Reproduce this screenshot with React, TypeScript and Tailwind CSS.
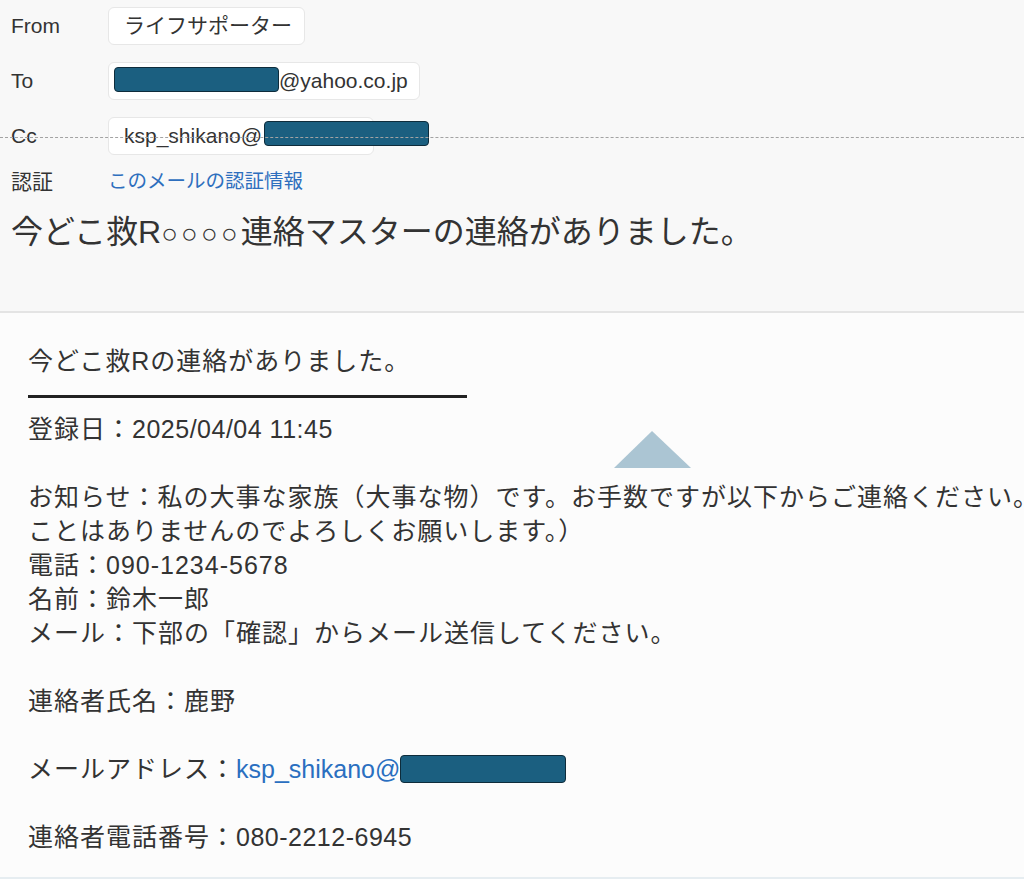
const FONT = "font-['Liberation_Sans','Noto_Sans_CJK_JP',sans-serif]"

function Redacted({ className = '' }: { className?: string }) {
  return (
    <span
      className={`inline-block shrink-0 h-[25px] w-[165px] rounded-[4px] bg-[#1b5f80] border-[1.5px] border-[#0e2c3b] ${className}`}
    />
  )
}

function Pill({ children, className = '' }: { children: React.ReactNode; className?: string }) {
  return (
    <div
      className={`flex items-center h-[38px] px-[15px] bg-white border border-[#e7e7e7] rounded-[6px] whitespace-nowrap ${className}`}
    >
      {children}
    </div>
  )
}

const bodyLines: (string | null)[] = [
  'お知らせ：私の大事な家族（大事な物）です。お手数ですが以下からご連絡ください。',
  'ことはありませんのでよろしくお願いします。）',
  '電話：090-1234-5678',
  '名前：鈴木一郎',
  'メール：下部の「確認」からメール送信してください。',
  null,
  '連絡者氏名：鹿野',
  null,
]

export default function App() {
  return (
    <div className={`relative w-[1024px] h-[879px] overflow-hidden flex flex-col bg-[#fcfcfc] text-[#333] ${FONT}`}>
      {/* Header */}
      <div className="h-[313px] shrink-0 bg-[#f8f8f8] border-b-2 border-[#e4e4e4] pl-[11px] pt-[7px]">
        <div className="flex items-center h-[38px] text-[21px]">
          <span className="w-[97px]">From</span>
          <Pill className="pr-[12px]">ライフサポーター</Pill>
        </div>
        <div className="flex items-center h-[38px] mt-[17px] text-[21px]">
          <span className="w-[97px]">To</span>
          <Pill className="pr-[11px]">
            <Redacted className="-ml-[10px] mb-[3px]" />
            <span>@yahoo.co.jp</span>
          </Pill>
        </div>
        <div className="flex items-center h-[38px] mt-[17px] text-[21px]">
          <span className="w-[97px]">Cc</span>
          <Pill className="w-[266px]">
            <span>ksp_shikano@</span>
            <Redacted className="ml-[2px] mb-[5px]" />
          </Pill>
        </div>
        <div className="flex items-center h-[28px] mt-[13px]">
          <span className="w-[97px] text-[21px]">認証</span>
          <span className="text-[19.5px] text-[#2e6fbe]">このメールの認証情報</span>
        </div>
        <h1 className="mt-[16px] text-[32px] leading-[40px] whitespace-nowrap">
          今どこ救R<span className="text-[28px] tracking-[3px]">○○○○</span>連絡マスターの連絡がありました。
        </h1>
      </div>

      {/* Body */}
      <div className="flex-1 border-b-2 border-[#e6edf1] pl-[28px] pt-[31px] text-[25px] leading-[34px] tracking-[1px] whitespace-nowrap">
        <div>今どこ救Rの連絡がありました。</div>
        <div className="h-[34px] flex items-center pt-[2px]">
          <div className="w-[439px] h-[3px] bg-[#222]" />
        </div>
        <div>
          登録日：<span className="tracking-[0.5px]">2025/04/04 11:45</span>
        </div>
        <div className="h-[34px]" />
        {bodyLines.map((line, i) =>
          line === null ? <div key={i} className="h-[34px]" /> : <div key={i}>{line}</div>
        )}
        <div className="flex items-center">
          <span>メールアドレス：</span>
          <span className="text-[#2a6fc0] tracking-normal">ksp_shikano@</span>
          <Redacted className="h-[28px] w-[166px]" />
        </div>
        <div className="h-[34px]" />
        <div>
          連絡者電話番号：<span className="tracking-[0.5px]">080-2212-6945</span>
        </div>
      </div>

      {/* scroll-up arrow */}
      <svg className="absolute left-[614px] top-[431px]" width="77" height="37" viewBox="0 0 77 37">
        <polygon points="0,37 38,0 77,37" fill="#abc5d3" />
      </svg>

      {/* dashed guide line */}
      <div className="absolute left-0 right-0 top-[137px] border-t border-dashed border-[#a3a3a3]" />
    </div>
  )
}
